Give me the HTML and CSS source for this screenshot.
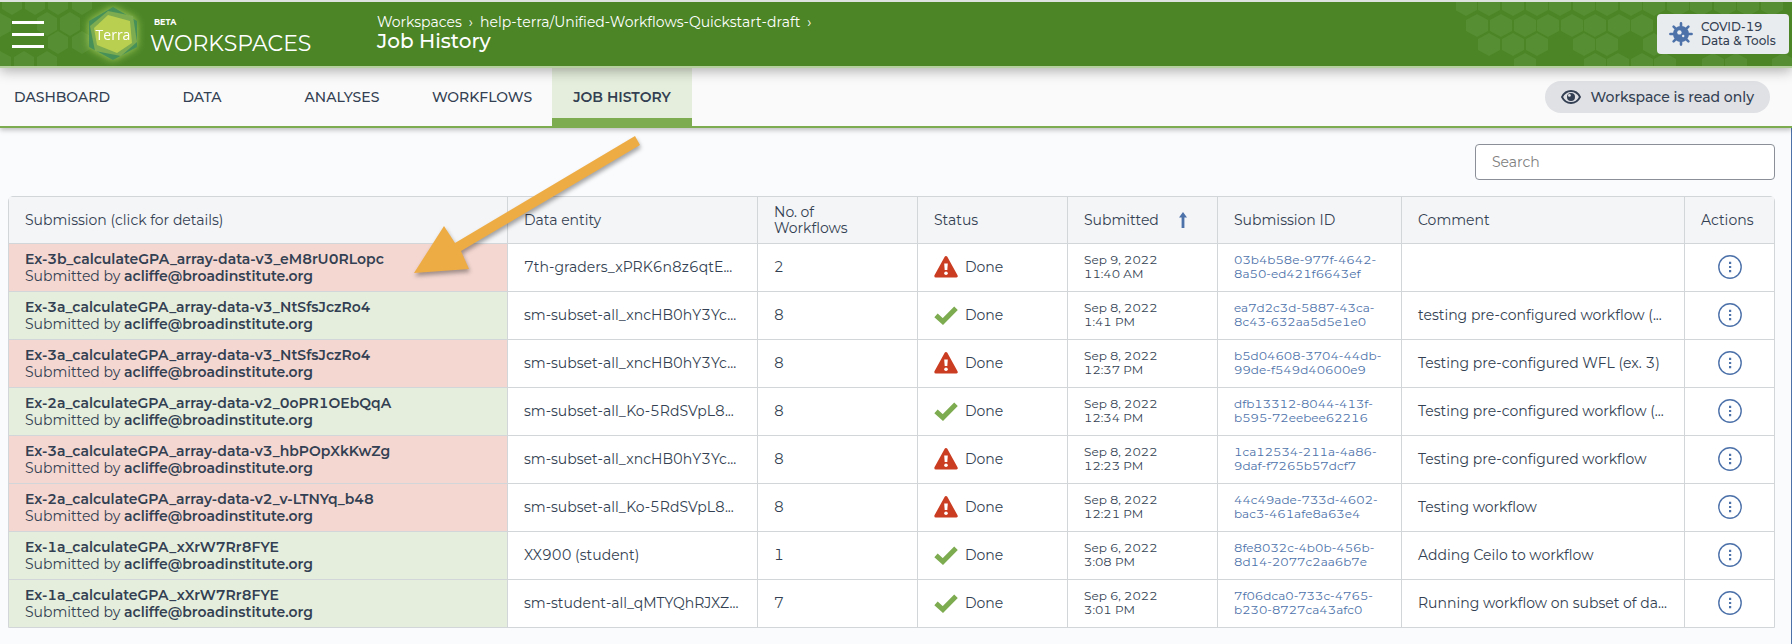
FILE: index.html
```html
<!DOCTYPE html>
<html lang="en">
<head>
    <meta charset="UTF-8">
    <meta name="viewport" content="width=device-width, initial-scale=1.0">
    <title>Job History</title>
    <link rel="stylesheet" href="styles.css">
</head>
<body>

    <!-- Shared icons -->
    <svg class="sprite" aria-hidden="true">
        <symbol id="icon-error" viewBox="0 0 24 24">
            <path d="M12 2.5 22.2 21H1.8z" fill="#cb3d22" stroke="#cb3d22" stroke-width="3" stroke-linejoin="round"/>
            <path d="M10.2 8.5h3.6l-.5 6.6h-2.6z" fill="#fff"/>
            <circle cx="12" cy="18.2" r="1.8" fill="#fff"/>
        </symbol>
        <symbol id="icon-done" viewBox="0 0 24 24">
            <path d="M2 12.4 8.9 18.6 22 5.2" fill="none" stroke="#7dab50" stroke-width="5"/>
        </symbol>
        <symbol id="icon-menu" viewBox="0 0 24 24">
            <circle cx="12" cy="12" r="11.2" fill="none" stroke="#4d72aa" stroke-width="1.4"/>
            <path d="M11 6.8h2.2v2.2H11zM11 10.9h2.2v2.2H11zM11 15h2.2v2.2H11z" fill="#4d72aa"/>
        </symbol>
    </svg>

    <!-- Top Bar -->
    <header class="topbar">
        <svg class="pattern pattern-left" width="100" height="64" viewBox="0 2 100 64" aria-hidden="true">
            <path d="M12-9l10 6V9l-10 6L2 9V-3zM35-9l10 6V9l-10 6-10-6V-3zM58-9l10 6V9l-10 6-10-6V-3zM82-9l10 6V9l-10 6-10-6V-3zM0 13l11 6v12L0 37zM47 12l10 6v12l-10 6-10-6V18zM70 12l10 6v12l-10 6-10-6V18zM58 31l10 6v11l-10 6-10-6V37zM82 31l10 6v11l-10 6-10-6V37zM0 51l11 6v12H0zM24 51l10 6v12H14V57zM47 51l10 6v12H37V57z"/>
        </svg>
        <svg class="pattern pattern-right" width="336" height="64" viewBox="1456 2 336 64" aria-hidden="true">
            <path d="M1466-7l11 6V10l-11 6-11-6V-1zM1489-7l11 6V10l-11 6-11-6V-1zM1513-7l11 6V10l-11 6-11-6V-1zM1537-7l11 6V10l-11 6-11-6V-1zM1560-7l11 6V10l-11 6-11-6V-1zM1584-7l11 6V10l-11 6-11-6V-1zM1607-7l11 6V10l-11 6-11-6V-1zM1631-7l11 6V10l-11 6-11-6V-1zM1654-7l11 6V10l-11 6-11-6V-1zM1678-7l11 6V10l-11 6-11-6V-1zM1701-7l11 6V10l-11 6-11-6V-1zM1725-7l11 6V10l-11 6-11-6V-1zM1748-7l11 6V10l-11 6-11-6V-1zM1772-7l11 6V10l-11 6-11-6V-1z"/>
            <path d="M1477 14l11 6v11l-11 6-11-6V20zM1501 14l11 6v11l-11 6-11-6V20zM1525 14l11 6v11l-11 6-11-6V20zM1548 14l11 6v11l-11 6-11-6V20zM1572 14l11 6v11l-11 6-11-6V20zM1595 14l11 6v11l-11 6-11-6V20zM1619 14l11 6v11l-11 6-11-6V20zM1642 14l11 6v11l-11 6-11-6V20z"/>
            <path d="M1489 33l11 6v11l-11 6-11-6V39zM1513 33l11 6v11l-11 6-11-6V39zM1537 33l11 6v11l-11 6-11-6V39zM1584 33l11 6v11l-11 6-11-6V39zM1607 33l11 6v11l-11 6-11-6V39zM1654 33l11 6v11l-11 6-11-6V39z"/>
            <path d="M1525 53l11 6v11h-22V59zM1595 53l11 6v11h-22V59zM1618 53l11 6v11h-22V59zM1642 53l11 6v11h-22V59zM1665 53l11 6v11h-22V59zM1713 53l11 6v11h-22V59zM1736 53l11 6v11h-22V59zM1783 53l11 6v11h-22V59z"/>
        </svg>

        <button type="button" class="hamburger" aria-label="Menu">
            <span></span><span></span><span></span>
        </button>

        <a href="#" class="brand">
            <svg class="logo" width="64" height="64" viewBox="0 0 64 64" aria-hidden="true">
                <path d="M32 5 56 19V45L32 58 8 45V19z" fill="#479158"/>
                <path d="M27 9 52 14 56 40 40 54 14 49 9 24z" fill="#7dab50"/>
                <path d="M27 13 49 19 51 41 36 51 16 43 13 26z" fill="#b8cf4f"/>
                <text x="32" y="38" text-anchor="middle" class="logo-text">Terra</text>
            </svg>
            <span class="brand-name">
                <small>BETA</small>
                WORKSPACES
            </span>
        </a>

        <div class="heading">
            <nav class="breadcrumb" aria-label="Breadcrumb">
                <a href="#">Workspaces</a><span>›</span><a href="#">help-terra/Unified-Workflows-Quickstart-draft</a><span>›</span>
            </nav>
            <h1>Job History</h1>
        </div>

        <a href="#" class="covid">
            <svg width="24" height="24" viewBox="0 0 24 24" aria-hidden="true">
                <path d="M12 1.4v21.2M1.4 12h21.2M4.6 4.6l14.8 14.8M19.4 4.6 4.6 19.4" stroke="#4d72aa" stroke-width="2.6" stroke-linecap="round"/>
                <circle cx="12" cy="12" r="8" fill="#4d72aa"/>
                <circle cx="10.4" cy="10.4" r="2.2" fill="#e9ecef"/>
                <circle cx="14.2" cy="14" r="1.2" fill="#e9ecef"/>
            </svg>
            <span>COVID-19<br>Data &amp; Tools</span>
        </a>
    </header>

    <!-- Tabs -->
    <div class="tabbar">
        <nav class="tabs" aria-label="Workspace">
            <a href="#">DASHBOARD</a>
            <a href="#">DATA</a>
            <a href="#">ANALYSES</a>
            <a href="#">WORKFLOWS</a>
            <a href="#" class="active" aria-current="page">JOB HISTORY</a>
        </nav>
        <div class="readonly">
            <svg width="20" height="20" viewBox="0 0 20 20" aria-hidden="true">
                <path d="M1 10C5 2 15 2 19 10 15 18 5 18 1 10z" fill="none" stroke="#333f52" stroke-width="1.8"/>
                <circle cx="10" cy="10" r="4" fill="#333f52"/>
                <circle cx="8.4" cy="8.4" r="1.4" fill="#e0e1e5"/>
            </svg>
            Workspace is read only
        </div>
    </div>

    <main class="content">
        <div class="toolbar">
            <input type="search" class="search" placeholder="Search" aria-label="Search">
        </div>

        <table class="jobs">
            <colgroup>
                <col>
                <col class="col-entity">
                <col class="col-count">
                <col class="col-status">
                <col class="col-date">
                <col class="col-id">
                <col class="col-comment">
                <col class="col-actions">
            </colgroup>
            <thead>
                <tr>
                    <th>Submission (click for details)</th>
                    <th>Data entity</th>
                    <th>No. of<br>Workflows</th>
                    <th>Status</th>
                    <th>
                        <span class="sorted">Submitted
                            <svg width="10" height="16" viewBox="0 0 10 16" aria-hidden="true"><path d="M5 0 9 5.4H6.4V16H3.6V5.4H1z" fill="#4d72aa"/></svg>
                        </span>
                    </th>
                    <th>Submission ID</th>
                    <th>Comment</th>
                    <th>Actions</th>
                </tr>
            </thead>
            <tbody>
                <tr>
                    <td class="failed"><a href="#">Ex-3b_calculateGPA_array-data-v3_eM8rU0RLopc</a>Submitted by <b>acliffe@broadinstitute.org</b></td>
                    <td>7th-graders_xPRK6n8z6qtE...</td>
                    <td>2</td>
                    <td><span class="status"><svg><use href="#icon-error"/></svg>Done</span></td>
                    <td class="small">Sep 9, 2022<br>11:40 AM</td>
                    <td class="small"><a href="#">03b4b58e-977f-4642-<br>8a50-ed421f6643ef</a></td>
                    <td></td>
                    <td class="actions"><button type="button" aria-label="Actions"><svg><use href="#icon-menu"/></svg></button></td>
                </tr>
                <tr>
                    <td class="succeeded"><a href="#">Ex-3a_calculateGPA_array-data-v3_NtSfsJczRo4</a>Submitted by <b>acliffe@broadinstitute.org</b></td>
                    <td>sm-subset-all_xncHB0hY3Yc...</td>
                    <td>8</td>
                    <td><span class="status"><svg><use href="#icon-done"/></svg>Done</span></td>
                    <td class="small">Sep 8, 2022<br>1:41 PM</td>
                    <td class="small"><a href="#">ea7d2c3d-5887-43ca-<br>8c43-632aa5d5e1e0</a></td>
                    <td>testing pre-configured workflow (...</td>
                    <td class="actions"><button type="button" aria-label="Actions"><svg><use href="#icon-menu"/></svg></button></td>
                </tr>
                <tr>
                    <td class="failed"><a href="#">Ex-3a_calculateGPA_array-data-v3_NtSfsJczRo4</a>Submitted by <b>acliffe@broadinstitute.org</b></td>
                    <td>sm-subset-all_xncHB0hY3Yc...</td>
                    <td>8</td>
                    <td><span class="status"><svg><use href="#icon-error"/></svg>Done</span></td>
                    <td class="small">Sep 8, 2022<br>12:37 PM</td>
                    <td class="small"><a href="#">b5d04608-3704-44db-<br>99de-f549d40600e9</a></td>
                    <td>Testing pre-configured WFL (ex. 3)</td>
                    <td class="actions"><button type="button" aria-label="Actions"><svg><use href="#icon-menu"/></svg></button></td>
                </tr>
                <tr>
                    <td class="succeeded"><a href="#">Ex-2a_calculateGPA_array-data-v2_0oPR1OEbQqA</a>Submitted by <b>acliffe@broadinstitute.org</b></td>
                    <td>sm-subset-all_Ko-5RdSVpL8...</td>
                    <td>8</td>
                    <td><span class="status"><svg><use href="#icon-done"/></svg>Done</span></td>
                    <td class="small">Sep 8, 2022<br>12:34 PM</td>
                    <td class="small"><a href="#">dfb13312-8044-413f-<br>b595-72eebee62216</a></td>
                    <td>Testing pre-configured workflow (...</td>
                    <td class="actions"><button type="button" aria-label="Actions"><svg><use href="#icon-menu"/></svg></button></td>
                </tr>
                <tr>
                    <td class="failed"><a href="#">Ex-3a_calculateGPA_array-data-v3_hbPOpXkKwZg</a>Submitted by <b>acliffe@broadinstitute.org</b></td>
                    <td>sm-subset-all_xncHB0hY3Yc...</td>
                    <td>8</td>
                    <td><span class="status"><svg><use href="#icon-error"/></svg>Done</span></td>
                    <td class="small">Sep 8, 2022<br>12:23 PM</td>
                    <td class="small"><a href="#">1ca12534-211a-4a86-<br>9daf-f7265b57dcf7</a></td>
                    <td>Testing pre-configured workflow</td>
                    <td class="actions"><button type="button" aria-label="Actions"><svg><use href="#icon-menu"/></svg></button></td>
                </tr>
                <tr>
                    <td class="failed"><a href="#">Ex-2a_calculateGPA_array-data-v2_v-LTNYq_b48</a>Submitted by <b>acliffe@broadinstitute.org</b></td>
                    <td>sm-subset-all_Ko-5RdSVpL8...</td>
                    <td>8</td>
                    <td><span class="status"><svg><use href="#icon-error"/></svg>Done</span></td>
                    <td class="small">Sep 8, 2022<br>12:21 PM</td>
                    <td class="small"><a href="#">44c49ade-733d-4602-<br>bac3-461afe8a63e4</a></td>
                    <td>Testing workflow</td>
                    <td class="actions"><button type="button" aria-label="Actions"><svg><use href="#icon-menu"/></svg></button></td>
                </tr>
                <tr>
                    <td class="succeeded"><a href="#">Ex-1a_calculateGPA_xXrW7Rr8FYE</a>Submitted by <b>acliffe@broadinstitute.org</b></td>
                    <td>XX900 (student)</td>
                    <td>1</td>
                    <td><span class="status"><svg><use href="#icon-done"/></svg>Done</span></td>
                    <td class="small">Sep 6, 2022<br>3:08 PM</td>
                    <td class="small"><a href="#">8fe8032c-4b0b-456b-<br>8d14-2077c2aa6b7e</a></td>
                    <td>Adding Ceilo to workflow</td>
                    <td class="actions"><button type="button" aria-label="Actions"><svg><use href="#icon-menu"/></svg></button></td>
                </tr>
                <tr>
                    <td class="succeeded"><a href="#">Ex-1a_calculateGPA_xXrW7Rr8FYE</a>Submitted by <b>acliffe@broadinstitute.org</b></td>
                    <td>sm-student-all_qMTYQhRJXZ...</td>
                    <td>7</td>
                    <td><span class="status"><svg><use href="#icon-done"/></svg>Done</span></td>
                    <td class="small">Sep 6, 2022<br>3:01 PM</td>
                    <td class="small"><a href="#">7f06dca0-733c-4765-<br>b230-8727ca43afc0</a></td>
                    <td>Running workflow on subset of da...</td>
                    <td class="actions"><button type="button" aria-label="Actions"><svg><use href="#icon-menu"/></svg></button></td>
                </tr>
            </tbody>
        </table>
    </main>

    <!-- Arrow pointing at the failed submission -->
    <svg class="arrow" width="240" height="150" viewBox="405 130 240 150" aria-hidden="true">
        <path d="M635 136 640 145 461 251 469 269 414 273 444 226 455 243z" fill="#eeac44"/>
    </svg>

</body>
</html>
```

FILE: styles.css
```css
* {
    margin: 0;
    padding: 0;
    box-sizing: border-box;
}
body {
    background-color: #fafbfd;
    color: #333f52;
    font-family: Montserrat, Inter, sans-serif;
    font-size: 14px;
    font-variant-numeric: tabular-nums;
    line-height: 17px;
    min-height: 100vh;
    display: flex;
    flex-direction: column;
    position: relative;
}
a {
    color: inherit;
    text-decoration: none;
}
.sprite {
    position: absolute;
    width: 0;
    height: 0;
}

/* Top bar */
.topbar {
    position: relative;
    z-index: 2;
    display: flex;
    align-items: center;
    height: 68px;
    padding: 0 3px 0 12px;
    background-color: #4b8526;
    border-top: 2px solid #dfe3e0;
    border-bottom: 2px solid #b6d0a0;
    box-shadow: 0 3px 12px rgba(0, 0, 0, 0.3);
    color: #fff;
}
.pattern {
    position: absolute;
    top: 0;
    fill: #568e33;
}
.pattern-left {
    left: 0;
}
.pattern-right {
    right: 0;
}
.hamburger {
    position: relative;
    width: 32px;
    display: flex;
    flex-direction: column;
    gap: 9px;
    background: none;
    border: none;
    cursor: pointer;
}
.hamburger span {
    height: 3px;
    background-color: #fff;
}
.brand {
    position: relative;
    width: 295px;
    margin-left: 37px;
    margin-right: 1px;
    display: flex;
    align-items: center;
    gap: 5px;
}
.logo {
    filter: drop-shadow(0 0 4px #a8cf5f);
}
.logo-text {
    font: 14px "Open Sans", sans-serif;
    fill: #fff;
}
.brand-name {
    padding-top: 8px;
    font-size: 22px;
    line-height: 28px;
}
.brand-name small {
    display: block;
    font-size: 8px;
    font-weight: 700;
    line-height: 8px;
    padding: 0 0 4px 4px;
}
.heading {
    flex: 1;
    padding-bottom: 3px;
}
.breadcrumb {
    display: flex;
    gap: 7px;
}
.heading h1 {
    font-size: 20px;
    font-weight: 500;
    line-height: 20px;
}
.covid {
    position: relative;
    display: flex;
    align-items: center;
    gap: 8px;
    width: 132px;
    height: 40px;
    padding-left: 12px;
    border-radius: 4px;
    background-color: #e9ecef;
    color: #333f52;
    font-size: 12px;
    font-weight: 500;
    line-height: 14px;
}

/* Tabs */
.tabbar {
    position: relative;
    display: flex;
    justify-content: space-between;
    align-items: center;
    height: 60px;
    padding-right: 22px;
    background-color: #fafafa;
    border-bottom: 2px solid #7dab50;
    box-shadow: 0 2px 5px rgba(0, 0, 0, 0.25);
}
.tabs {
    display: flex;
    align-self: stretch;
    margin-left: -8px;
}
.tabs a {
    width: 140px;
    line-height: 58px;
    text-align: center;
    font-weight: 500;
}
.tabs .active {
    background-color: #e5eedc;
    box-shadow: inset 0 -8px #7dab50;
    font-weight: 600;
}
.readonly {
    display: flex;
    align-items: center;
    gap: 10px;
    height: 32px;
    padding: 0 16px;
    border-radius: 16px;
    background-color: #e0e1e5;
    font-weight: 500;
}

/* Job table */
.content {
    flex: 1;
    padding: 16px 16px 16px 8px;
    border-right: 1px solid #4d72aa;
}
.toolbar {
    display: flex;
    justify-content: flex-end;
    margin-bottom: 16px;
}
.search {
    width: 300px;
    height: 36px;
    padding: 0 16px;
    border: 1px solid #8a8f98;
    border-radius: 4px;
    background-color: #fff;
    font: inherit;
}
.search::placeholder {
    color: #808080;
}
.jobs {
    width: 100%;
    table-layout: fixed;
    border: 1px solid #d3d6d9;
    border-radius: 5px 5px 0 0;
    border-spacing: 0;
    background-color: #fff;
}
.col-entity {
    width: 250px;
}
.col-count {
    width: 160px;
}
.col-status, .col-date {
    width: 150px;
}
.col-id {
    width: 184px;
}
.col-comment {
    width: 283px;
}
.col-actions {
    width: 90px;
}
.jobs th, .jobs td {
    height: 48px;
    padding: 0 0 0 16px;
    text-align: left;
    white-space: nowrap;
    border-left: 1px solid #d3d6d9;
}
.jobs th {
    height: 46px;
    line-height: 16px;
    font-weight: 400;
    background-color: #f4f5f7;
}
.jobs td {
    padding-bottom: 1px;
    border-top: 1px solid #d3d6d9;
}
.jobs tr > :first-child {
    padding-bottom: 0;
    border-left: none;
}
.jobs .failed {
    background-color: #f4d7d1;
}
.jobs .succeeded {
    background-color: #e5eedc;
}
.failed a, .succeeded a {
    display: block;
    font-weight: 600;
}
.jobs b {
    font-weight: 600;
}
.jobs .small {
    font-size: 12px;
    line-height: 14px;
}
.small a {
    color: #4d72aa;
}
.sorted {
    display: flex;
    align-items: center;
    gap: 19px;
}
.status {
    display: flex;
    align-items: center;
    gap: 7px;
}
.status svg, .actions svg {
    display: block;
    width: 24px;
    height: 24px;
}
.jobs .actions {
    padding: 0 0 1px;
}
.actions button {
    display: block;
    margin: 0 auto;
    background: none;
    border: none;
    cursor: pointer;
}
.arrow {
    position: absolute;
    left: 405px;
    top: 130px;
    filter: drop-shadow(1px 3px 2px rgba(0, 0, 0, 0.35));
    pointer-events: none;
}
```
